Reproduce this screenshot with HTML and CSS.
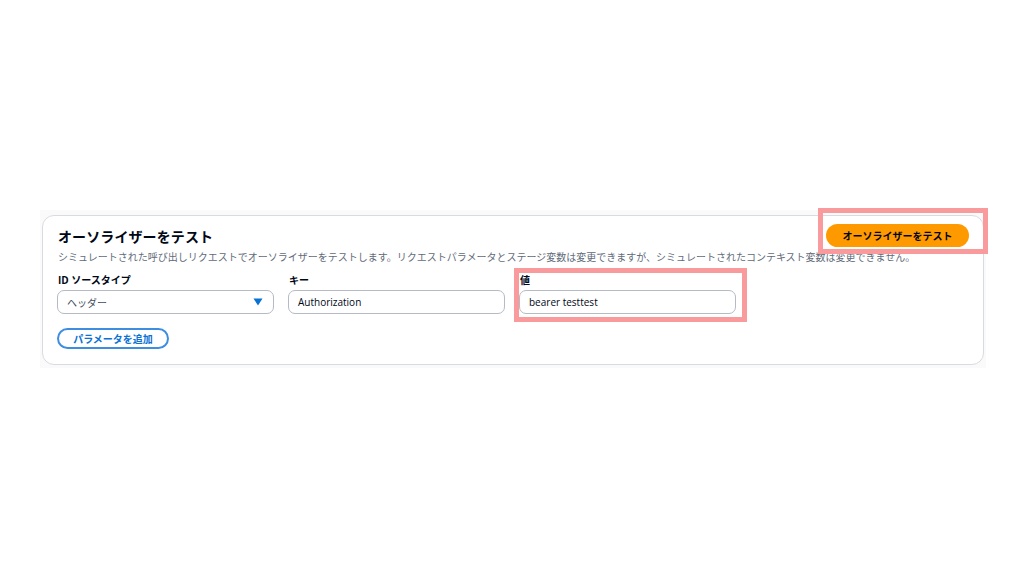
FILE: index.html
```html
<!DOCTYPE html>
<html lang="ja">
<head>
    <meta charset="UTF-8">
    <meta name="viewport" content="width=device-width, initial-scale=1.0">
    <title>オーソライザーをテスト</title>
    <link rel="stylesheet" href="styles.css">
</head>
<body>
    <div class="page">
        <div class="panel">
            <div class="card">
                <!-- ヘッダー -->
                <div class="card-header">
                    <h2>オーソライザーをテスト</h2>
                    <button class="btn-primary">オーソライザーをテスト</button>
                </div>
                <p class="desc">シミュレートされた呼び出しリクエストでオーソライザーをテストします。リクエストパラメータとステージ変数は変更できますが、シミュレートされたコンテキスト変数は変更できません。</p>

                <!-- パラメータ行 -->
                <div class="param-row">
                    <div class="field">
                        <label>ID ソースタイプ</label>
                        <div class="select">
                            <span>ヘッダー</span>
                            <svg width="10" height="8" viewBox="0 0 10 8"><path d="M0.5 0.5h9L5 7.5z" fill="#0972d3"/></svg>
                        </div>
                    </div>
                    <div class="field">
                        <label>キー</label>
                        <div class="input">Authorization</div>
                    </div>
                    <div class="field">
                        <label>値</label>
                        <div class="input">bearer testtest</div>
                    </div>
                </div>

                <button class="btn-normal">パラメータを追加</button>

                <!-- 注釈の枠 -->
                <div class="mark mark-button"></div>
                <div class="mark mark-value"></div>
            </div>
        </div>
    </div>
</body>
</html>
```

FILE: styles.css
```css
* {
    box-sizing: border-box;
    margin: 0;
    padding: 0;
}

body {
    font-family: 'Open Sans', 'Noto Sans CJK JP', sans-serif;
    background: #ffffff;
    color: #000716;
}

.page {
    padding: 210px 0 0 40px;
}

.panel {
    width: 946px;
    padding: 5px 2px 3px 2px;
    background: #fafafb;
}

/* カード */
.card {
    position: relative;
    background: #ffffff;
    border: 1px solid #d8dbe0;
    border-radius: 12px;
    padding: 8px 14px 15px 14px;
}

.card-header {
    display: flex;
    justify-content: space-between;
    align-items: center;
    height: 23px;
    padding-left: 1px;
}

.card-header h2 {
    font-size: 14px;
    font-weight: 700;
    letter-spacing: 0.1px;
}

.desc {
    margin-top: 3px;
    padding-left: 1px;
    font-size: 10px;
    line-height: 14px;
    color: #5f6b7a;
}

/* ボタン */
.btn-primary {
    background: #ff9900;
    color: #000716;
    border: none;
    border-radius: 12px;
    height: 23px;
    width: 143px;
    font-family: inherit;
    font-size: 10px;
    font-weight: 700;
}

.btn-normal {
    display: block;
    margin-top: 14px;
    width: 112px;
    height: 21px;
    background: #ffffff;
    color: #0972d3;
    border: 2px solid #3d8ee0;
    border-radius: 11px;
    font-family: inherit;
    font-size: 10px;
    font-weight: 700;
}

/* フィールド */
.param-row {
    display: grid;
    grid-template-columns: 217px 217px 217px;
    gap: 14px;
    margin-top: 9px;
}

.field label {
    display: block;
    font-size: 10px;
    font-weight: 700;
    line-height: 14px;
    margin-bottom: 3px;
    padding-left: 1px;
}

.select,
.input {
    height: 24px;
    border: 1px solid #b4bbc4;
    border-radius: 7px;
    padding: 0 9px;
    display: flex;
    align-items: center;
    font-size: 10px;
}

.select {
    justify-content: space-between;
    color: #414d5c;
    padding-right: 10px;
}

/* 注釈 */
.mark {
    position: absolute;
    border: 5px solid #f99a9c;
    pointer-events: none;
}

.mark-button {
    left: 775px;
    top: -8px;
    width: 170px;
    height: 46px;
}

.mark-value {
    left: 471px;
    top: 52px;
    width: 233px;
    height: 54px;
}
```
